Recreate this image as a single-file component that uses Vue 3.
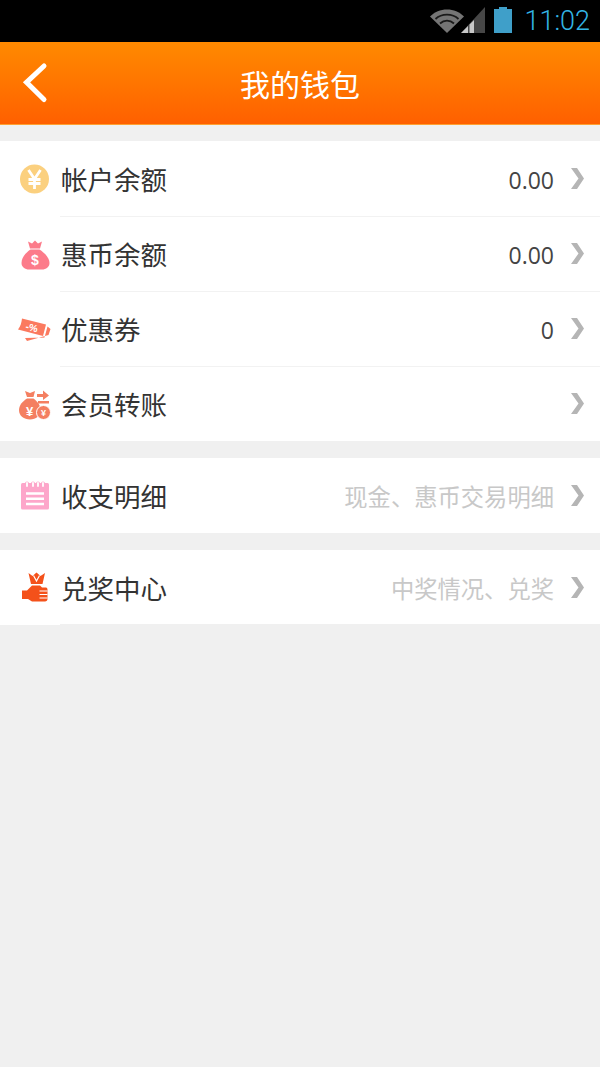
<script setup>
const groups = [
  [
    { id: "yuan", label: "帐户余额", value: "0.00" },
    { id: "bag", label: "惠币余额", value: "0.00" },
    { id: "coupon", label: "优惠券", value: "0" },
    { id: "transfer", label: "会员转账", value: "" }
  ],
  [{ id: "note", label: "收支明细", hint: "现金、惠币交易明细" }],
  [{ id: "prize", label: "兑奖中心", hint: "中奖情况、兑奖" }]
];
</script>

<template>
  <div class="page">
    <div class="status">
      <svg class="status__wifi" width="34" height="24" viewBox="0 0 34 24">
        <path d="M0 7.500C4.500 3 10.500.5 17 .5S29.500 3 34 7.500L17 24Z" fill="#757575" />
        <path d="M5.500 10C8.500 7.200 12.500 5.700 17 5.700S25.500 7.200 28.500 10M10 14.500C12 12.700 14.300 11.700 17 11.700S22 12.700 24 14.500" fill="none" stroke="#1a1a1a" stroke-width="1.800" />
      </svg>
      <svg class="status__signal" width="24" height="26" viewBox="0 0 24 26">
        <path d="M24 0V26H0Z" fill="#474747" />
        <path d="M7 19V26H0ZM8.500 17.500L13 13V26H8.500Z" fill="#c8c8c8" />
      </svg>
      <svg class="status__battery" width="18" height="26" viewBox="0 0 18 26">
        <path d="M5 0H13V2H18V26H0V2H5Z" fill="#3f9fc9" />
      </svg>
      <span class="status__time">11:02</span>
    </div>

    <header class="bar">
      <svg class="bar__back" width="26" height="44" viewBox="0 0 26 44">
        <path d="M22 6L4.500 22.300L22 39.500" fill="none" stroke="#fff" stroke-width="5" stroke-linecap="round" stroke-linejoin="miter" />
      </svg>
      <h1>我的钱包</h1>
    </header>

    <section v-for="(group, i) in groups" :key="i" class="group">
      <div v-for="row in group" :key="row.id" class="row">
        <svg class="row__icon" width="32" height="32" viewBox="0 0 32 32">
          <template v-if="row.id === 'yuan'">
            <circle cx="15.500" cy="16" r="14.500" fill="#fbd07f" />
            <path d="M9.500 7L15.500 16L21.500 7M15.500 16V26M9.500 16.500H21.500M9.500 20.500H21.500" fill="none" stroke="#fff" stroke-width="2.800" />
          </template>
          <template v-else-if="row.id === 'bag'">
            <path d="M9 3.500L13 5.500L16 2.500L19 5.500L23 3.500L21 10.500H11Z" fill="#fc7b8a" />
            <path d="M11.500 11.500H20.500C25 14.500 30.500 19.500 30.500 25C30.500 29 27 31.500 23 31.500H10C6 31.500 2.500 29 2.500 25C2.500 19.500 7 14.500 11.500 11.500Z" fill="#fc7b8a" />
            <text x="16" y="27" text-anchor="middle" class="row__glyph" font-size="14">$</text>
          </template>
          <template v-else-if="row.id === 'coupon'">
            <path d="M3 5.500L27 11.500L24 23L-1 16.500C1.500 13.500 2.500 9.500 3 5.500Z" fill="#fb7a5f" />
            <path d="M28.500 13.500L31.500 16L29.500 22L8 28L6 25L25.500 24.500Z" fill="#fb7a5f" />
            <text x="13" y="18" text-anchor="middle" class="row__glyph" font-size="10" transform="rotate(14 13 14)">-%</text>
          </template>
          <template v-else-if="row.id === 'transfer'">
            <path d="M6 3L11 5L16 3L14.500 9H8Z" fill="#f47f61" />
            <path d="M8 10.500H14.500C18 13 21.500 17 21.500 22C21.500 28 17 31.500 11 31.500C5 31.500 0 28 0 22C0 17 4 13 8 10.500Z" fill="#f47f61" />
            <path d="M18 6H24V2.500L30 7.500L24 12V9H18Z" fill="#f47f61" />
            <path d="M19 13H30V15.500H19Z" fill="#f47f61" />
            <circle cx="24.500" cy="24.500" r="7" fill="#f47f61" stroke="#fff" stroke-width="1" />
            <text x="10.500" y="28" text-anchor="middle" class="row__glyph" font-size="13">¥</text>
            <text x="24.500" y="28" text-anchor="middle" class="row__glyph" font-size="9">¥</text>
          </template>
          <template v-else-if="row.id === 'note'">
            <rect x="2" y="3" width="28" height="26.500" rx="1.500" fill="#fda6ca" />
            <path d="M6 3.500a2 2 0 0 1 4 0M12 3.500a2 2 0 0 1 4 0M17 3.500a2 2 0 0 1 4 0M22 3.500a2 2 0 0 1 4 0" fill="#fda6ca" />
            <path d="M8 3V6M14 3V6M19 3V6M24 3V6" stroke="#fff" stroke-width="1.800" stroke-linecap="round" />
            <path d="M7 13.500H25M7 18.800H25M7 24H25" stroke="#fff" stroke-width="2.600" />
          </template>
          <template v-else>
            <path d="M9.500 1L13.500 4L17.500 .5L21.500 4L26 1L23.500 12H12Z" fill="#f4511a" />
            <path d="M14.500 3.500L17.500 9L20.500 3.500" fill="none" stroke="#fff" stroke-width="1.200" />
            <path d="M3 18.500H8L13 13.500H21L23 15.500H27C28 15.500 28.500 16.500 28.500 18V27C28.500 28.500 27.500 29.500 26 29.500H13L9 27H3Z" fill="#f4511a" />
            <path d="M20.500 19H28.500M20.500 22.500H28.500M20.500 26H28.500" stroke="#fff" stroke-width="1" />
          </template>
        </svg>
        <div class="row__body">
          <span class="row__label">{{ row.label }}</span>
          <span v-if="row.hint" class="row__hint">{{ row.hint }}</span>
          <span v-else class="row__value">{{ row.value }}</span>
          <svg class="row__arrow" width="14" height="21" viewBox="0 0 14 21">
            <path d="M1 0H7L14 10.500L7 21H1L8.500 10.500Z" fill="#b5b5b5" />
          </svg>
        </div>
      </div>
    </section>
  </div>
</template>

<style scoped>
.page {
  min-height: 1067px;
  background: #f0f0f0;
  font-family: "Noto Sans CJK SC", "Noto Sans", sans-serif;
}

.status {
  height: 42px;
  box-sizing: border-box;
  background: #000;
  display: flex;
  align-items: center;
  justify-content: flex-end;
  padding-right: 10px;
}

.status__wifi {
  margin-right: -3px;
}

.status__signal {
  margin-right: 9px;
  margin-top: -2px;
}

.status__battery {
  margin-right: 12px;
  margin-top: -2px;
}

.status__time {
  color: #33b5e5;
  font-family: Roboto, sans-serif;
  font-weight: 300;
  font-size: 27px;
  line-height: 44px;
}

.bar {
  height: 83px;
  box-sizing: border-box;
  background: linear-gradient(#ff8a00, #ff6000);
  border-bottom: 1px solid #ffa030;
  display: flex;
  align-items: center;
  justify-content: center;
  position: relative;
}

.bar h1 {
  margin: 0 0 1px;
  color: #fff;
  font-size: 30px;
  font-weight: 400;
}

.bar__back {
  position: absolute;
  left: 22px;
  top: 18px;
}

.group {
  margin-top: 16px;
  background: #fff;
}

.group + .group {
  margin-top: 17px;
}

.row {
  height: 75px;
  display: flex;
  align-items: center;
}

.row__icon {
  flex: none;
  margin: 0 9px 0 19px;
  overflow: visible;
}

.row__body {
  flex: 1;
  height: 100%;
  display: flex;
  align-items: center;
  padding-right: 16px;
  box-shadow: 0 1px 0 #f2f2f2;
}

.row:last-child .row__body {
  box-shadow: none;
}

.group:last-child .row__body {
  box-shadow: inset 0 -1px 0 #f0f0f0;
}

.row__label {
  font-size: 26.500px;
  margin-left: 1px;
  color: #333;
  flex: 1;
}

.row__value {
  font-family: "Open Sans", sans-serif;
  font-size: 23px;
  color: #444;
  margin-top: 2px;
}

.row__hint {
  font-size: 23.300px;
  color: #c8c8c8;
}

.row__arrow {
  margin-left: 16px;
}

.row__glyph {
  fill: #fff;
  font-family: "Liberation Sans", sans-serif;
  font-weight: 700;
}
</style>
